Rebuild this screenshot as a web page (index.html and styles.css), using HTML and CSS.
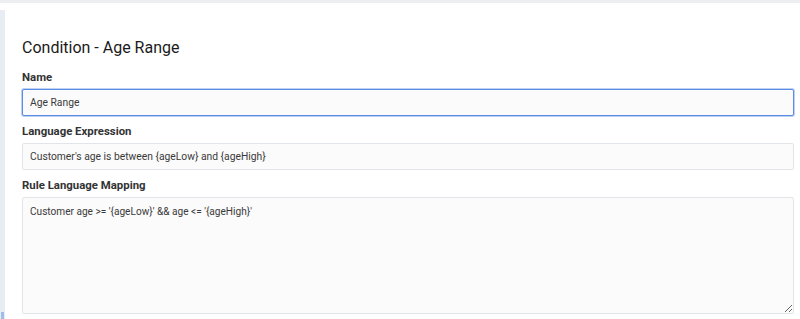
FILE: index.html
```html
<!DOCTYPE html>
<html>
<head>
<meta charset="utf-8">
<link rel="stylesheet" href="styles.css">
</head>
<body>
<div class="topbar"></div>
<div class="layout">
  <div class="rail"><div class="rail-mark"></div></div>
  <main class="panel">
    <h1 class="title">Condition - Age Range</h1>
    <div class="field">
      <label class="label">Name</label>
      <input class="input focused" type="text" value="Age Range">
    </div>
    <div class="field">
      <label class="label">Language Expression</label>
      <input class="input" type="text" value="Customer's age is between {ageLow} and {ageHigh}">
    </div>
    <div class="field">
      <label class="label">Rule Language Mapping</label>
      <textarea class="input area">Customer age &gt;= '{ageLow}' &amp;&amp; age &lt;= '{ageHigh}'</textarea>
    </div>
  </main>
</div>
</body>
</html>
```
FILE: styles.css
```css
* { box-sizing: border-box; }
html, body { margin: 0; padding: 0; background: #fff; }
body {
  font-family: Roboto, "Liberation Sans", Arial, sans-serif;
  color: #222;
  height: 319px;
  overflow: hidden;
}
.topbar {
  height: 3px;
  background: #eceeef;
}
.layout {
  display: flex;
  height: 316px;
}
.rail {
  width: 5px;
  margin-top: 7px;
  background: #e8edf4;
  display: flex;
  flex-direction: column;
  justify-content: flex-end;
}
.rail-mark {
  height: 7px;
  margin-left: 1px;
  width: 3px;
  background: #9fbde6;
}
.panel {
  flex: 1;
  padding: 0 6px 0 17px;
}
.title {
  margin: 34px 0 0;
  font-size: 16px;
  font-weight: 400;
  line-height: 22px;
  color: #1b1b1b;
}
.field {
  display: flex;
  flex-direction: column;
}
.label {
  font-size: 11.4px;
  font-weight: 700;
  line-height: 14px;
  color: #333;
  margin: 8px 0 5px;
}
.field:first-of-type .label { margin-top: 11px; }
.input {
  width: 100%;
  height: 27px;
  border: 1px solid #e1e5ea;
  border-radius: 2px;
  background: #fbfbfb;
  padding: 0 7px;
  font-family: Roboto, "Liberation Sans", Arial, sans-serif;
  font-size: 10.3px;
  color: #3a3a3a;
  outline: none;
}
.focused {
  border: 1px solid #5a8ce4;
  box-shadow: 0 0 0 1px rgba(90, 140, 228, 0.4);
}
.area {
  height: 117px;
  padding: 7px 7px;
  font-size: 10.1px;
  resize: vertical;
  line-height: 14px;
}
```
